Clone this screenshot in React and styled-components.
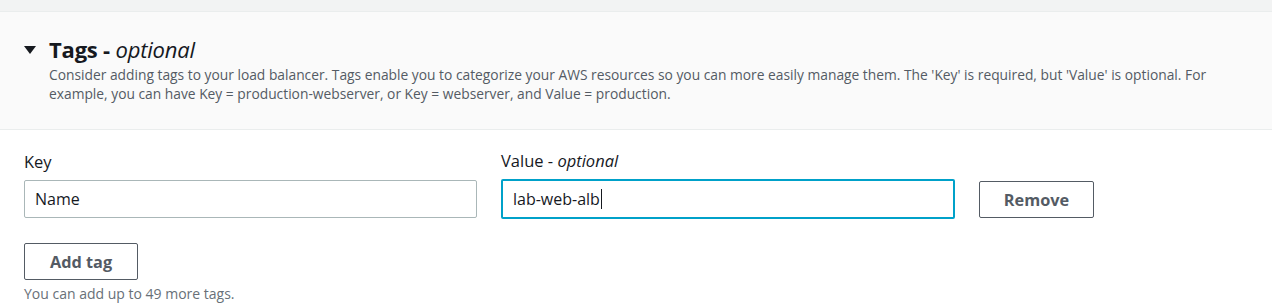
import React from "react";
import styled, { createGlobalStyle } from "styled-components";

const GlobalStyle = createGlobalStyle`
  body {
    margin: 0;
    background: #ffffff;
    font-family: "Open Sans", "Noto Sans", sans-serif;
    color: #16191f;
  }
`;

const Page = styled.div`
  width: 1272px;
  height: 304px;
  overflow: hidden;
  background: #ffffff;
`;

const TopStrip = styled.div`
  height: 11px;
  background: #f2f3f3;
  border-bottom: 1px solid #eaeded;
`;

const Header = styled.div`
  background: #fafafa;
  border-bottom: 1px solid #eaeded;
  padding: 24px 40px 0 24px;
  height: 118px;
  box-sizing: border-box;
`;

const TitleRow = styled.div`
  display: flex;
  align-items: center;
  gap: 13px;
  height: 26px;
`;

const Caret = styled.span`
  width: 0;
  height: 0;
  border-left: 6px solid transparent;
  border-right: 6px solid transparent;
  border-top: 8px solid #16191f;
  margin-top: 1px;
`;

const Title = styled.h2`
  margin: 0;
  font-size: 22px;
  font-weight: 700;
  line-height: 26px;
  color: #16191f;
  letter-spacing: -0.2px;

  em {
    font-weight: 400;
    font-style: italic;
  }
`;

const Description = styled.p`
  margin: 3px 0 0 25px;
  font-size: 13.8px;
  line-height: 19px;
  color: #545b64;
`;

const Body = styled.div`
  padding: 20px 24px 0 24px;
`;

const Row = styled.div`
  display: flex;
  align-items: flex-end;
  gap: 24px;
`;

const Field = styled.div`
  display: flex;
  flex-direction: column;
  width: ${({ $width }) => $width}px;
`;

const Label = styled.label`
  font-size: 16.5px;
  line-height: 22px;
  color: #16191f;
  margin-bottom: 7px;

  em {
    font-style: italic;
  }
`;

const inputBox = ({ $focused }) => `
  box-sizing: border-box;
  height: ${$focused ? 40 : 38}px;
  width: 100%;
  font-family: inherit;
  font-size: 16px;
  color: #16191f;
  background: #ffffff;
  border: ${$focused ? "2px solid #00a1c9" : "1px solid #aab7b8"};
  border-radius: 2px;
  outline: none;
  padding: 0 0 0 10px;
  margin-bottom: ${$focused ? -1 : 0}px;
`;

const Input = styled.input`
  ${inputBox}
`;

const FocusedInput = styled.div`
  ${inputBox}
  display: flex;
  align-items: center;
  cursor: text;
`;

const TextCaret = styled.span`
  display: inline-block;
  width: 1px;
  height: 20px;
  background: #16191f;
  margin-left: 1px;
`;

const Button = styled.button`
  box-sizing: border-box;
  height: ${({ $height }) => $height}px;
  width: ${({ $width }) => $width}px;
  background: #ffffff;
  border: 1px solid #545b64;
  border-radius: 2px;
  font-family: inherit;
  font-size: 16.3px;
  font-weight: 700;
  color: #545b64;
  cursor: pointer;
  margin-bottom: ${({ $offset }) => $offset || 0}px;
`;

const Footer = styled.div`
  margin-top: 25px;
`;

const Hint = styled.div`
  margin-top: 5px;
  font-size: 14px;
  line-height: 18px;
  color: #687078;
`;

export default function App() {
  return (
    <Page>
      <GlobalStyle />
      <TopStrip />
      <Header>
        <TitleRow>
          <Caret />
          <Title>
            Tags - <em>optional</em>
          </Title>
        </TitleRow>
        <Description>
          Consider adding tags to your load balancer. Tags enable you to categorize your AWS resources so you can more
          easily manage them. The 'Key' is required, but 'Value' is optional. For example, you can have Key =
          production-webserver, or Key = webserver, and Value = production.
        </Description>
      </Header>
      <Body>
        <Row>
          <Field $width={453}>
            <Label>Key</Label>
            <Input defaultValue="Name" />
          </Field>
          <Field $width={454}>
            <Label>
              Value - <em>optional</em>
            </Label>
            <FocusedInput $focused>
              <span>lab-web-alb</span>
              <TextCaret />
            </FocusedInput>
          </Field>
          <Button $width={115} $height={37}>
            Remove
          </Button>
        </Row>
        <Footer>
          <Button $width={114} $height={37}>
            Add tag
          </Button>
          <Hint>You can add up to 49 more tags.</Hint>
        </Footer>
      </Body>
    </Page>
  );
}
